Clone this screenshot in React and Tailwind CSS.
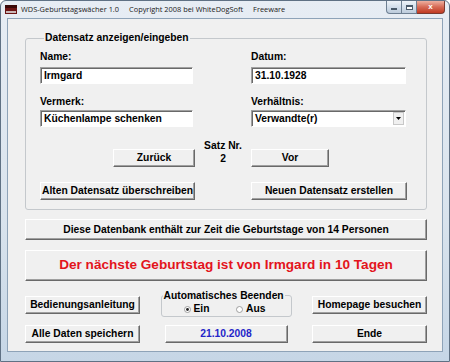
import React from "react";

const raised =
  "bg-[#f0f0f0] border border-t-white border-l-white border-r-[#696969] border-b-[#696969] shadow-[inset_-1px_-1px_0_#a0a0a0]";
const sunken =
  "bg-white border border-t-[#a0a0a0] border-l-[#a0a0a0] border-r-white border-b-white shadow-[inset_1px_1px_0_#696969]";

function Radio({ checked }) {
  return (
    <svg width="7" height="7" viewBox="0 0 7 7" className="shrink-0">
      <circle cx="3.5" cy="3.5" r="3" fill="#fff" stroke="#8a8a8a" strokeWidth="0.8" />
      {checked && <circle cx="3.5" cy="3.5" r="1.4" fill="#222" />}
    </svg>
  );
}

function Btn({ children, className = "" }) {
  return (
    <div className={`${raised} h-[18px] flex items-center justify-center leading-none ${className}`}>
      {children}
    </div>
  );
}

export default function App() {
  return (
    <div
      className="w-[450px] h-[362px] flex flex-col border border-[#5f7184] rounded-t-[6px] bg-[linear-gradient(to_bottom,#e7edf4,#d9e3ed_60%,#c6d6e6)] overflow-hidden"
      style={{ fontFamily: '"Liberation Sans", Arial, sans-serif' }}
    >
      {/* Title bar */}
      <div className="h-[17px] flex items-start shrink-0">
        <div className="pt-[4px] pl-[4px]">
          <svg width="12" height="9" viewBox="0 0 12 9">
            <rect x="0" y="0" width="12" height="9" fill="#6b1414" />
            <rect x="0" y="0" width="12" height="3" fill="#3a0808" />
            <rect x="1" y="6" width="10" height="2" fill="#c9b7b7" />
          </svg>
        </div>
        <div
          className="flex items-center h-[17px] pl-[4px] text-[7.4px] text-[#1a1a1a] whitespace-nowrap"
          style={{ fontFamily: '"Open Sans", "Noto Sans", sans-serif' }}
        >
          <span>WDS-Geburtstagswächer 1.0</span>
          <span className="ml-[10px]">Copyright 2008 bei WhiteDogSoft</span>
          <span className="ml-[10px]">Freeware</span>
        </div>
        <div className="ml-auto mr-[4px] flex h-[13px]">
          <div className="w-[16px] h-[13px] border border-[#6d7f92] border-t-0 rounded-bl-[4px] bg-[linear-gradient(to_bottom,#eef3f8,#d3dfeb_50%,#bccbdb)] flex items-center justify-center">
            <div className="w-[6px] h-[2px] bg-white border border-[#4a5a6a] mt-[3px]" />
          </div>
          <div className="w-[15px] h-[13px] border border-[#6d7f92] border-t-0 border-l-0 bg-[linear-gradient(to_bottom,#eef3f8,#d3dfeb_50%,#bccbdb)] flex items-center justify-center">
            <div className="w-[7px] h-[5px] border border-[#4a5a6a] border-t-2 bg-white" />
          </div>
          <div className="w-[28px] h-[13px] border border-[#7a3a30] border-t-0 border-l-0 rounded-br-[4px] bg-[linear-gradient(to_bottom,#eeb0a0,#d66a55_50%,#c13a22)] flex items-center justify-center">
            <span className="text-white font-bold text-[8px] leading-none">x</span>
          </div>
        </div>
      </div>

      {/* Client area */}
      <div className="flex-1 mx-[6px] mb-[9px] bg-[#f0f0f0] border border-[#8ea3b8] text-[10.3px] font-bold text-black pl-[17px] pr-[15px]">
        {/* Group box */}
        <div className="mt-[19px] border border-[#c4c8cc] rounded-[3px] pl-[14px] pb-[9px]">
          <div className="-mt-[7px] ml-[4px] px-[1px] w-fit bg-[#f0f0f0] leading-[12px]">
            Datensatz anzeigen/eingeben
          </div>
          <div className="grid grid-cols-[155px_56px_156px]">
            <div className="flex flex-col">
              <div className="mt-[7px] leading-[12px]">Name:</div>
              <div className={`${sunken} mt-[4px] h-[17px] w-[153px] flex items-center pl-[3px]`}>Irmgard</div>
              <div className="mt-[12px] leading-[12px]">Vermerk:</div>
              <div className={`${sunken} mt-[2px] h-[17px] w-[153px] flex items-center pl-[3px]`}>Küchenlampe schenken</div>
            </div>
            <div />
            <div className="flex flex-col">
              <div className="mt-[7px] leading-[12px]">Datum:</div>
              <div className={`${sunken} mt-[4px] h-[17px] w-[155px] flex items-center pl-[3px]`}>31.10.1928</div>
              <div className="mt-[12px] leading-[12px]">Verhältnis:</div>
              <div className={`${sunken} mt-[2px] h-[17px] w-[155px] flex items-center pl-[3px] pr-[1px]`}>
                <span className="flex-1">Verwandte(r)</span>
                <div className="w-[11px] h-[13px] bg-[#f0f0f0] border border-[#c8c8c8] flex items-center justify-center">
                  <svg width="5" height="3" viewBox="0 0 5 3">
                    <path d="M0 0H5L2.5 3Z" fill="#000" />
                  </svg>
                </div>
              </div>
            </div>

            {/* Navigation row */}
            <div className="flex justify-end mt-[22px]">
              <Btn className="w-[82px]">Zurück</Btn>
            </div>
            <div className="flex flex-col items-center mt-[12px] leading-[13px] -ml-[4px] mr-[-4px] whitespace-nowrap">
              <span>Satz Nr.</span>
              <span>2</span>
            </div>
            <div className="mt-[22px]">
              <Btn className="w-[78px]">Vor</Btn>
            </div>

            <div className="mt-[15px]">
              <Btn className="w-[155px]">Alten Datensatz überschreiben</Btn>
            </div>
            <div />
            <div className="mt-[15px]">
              <Btn className="w-[156px]">Neuen Datensatz erstellen</Btn>
            </div>
          </div>
        </div>

        {/* Info bar */}
        <div className={`${raised} mt-[9px] h-[21px] flex items-center justify-center`}>
          Diese Datenbank enthält zur Zeit die Geburtstage von 14 Personen
        </div>

        {/* Red bar */}
        <div className={`${raised} mt-[10px] h-[31px] flex items-center justify-center text-[13.6px] text-[#e3141c]`}>
          Der nächste Geburtstag ist von Irmgard in 10 Tagen
        </div>

        {/* Row 3 */}
        <div className="mt-[14px] flex justify-between items-start">
          <Btn className="w-[115px] mt-[1px]">Bedienungsanleitung</Btn>
          <div className="w-[131px] h-[22px] border border-[#c4c8cc] rounded-[3px] flex flex-col">
            <div className="-mt-[6px] ml-[1px] w-fit px-[1px] bg-[#f0f0f0] leading-[12px] whitespace-nowrap">
              Automatisches Beenden
            </div>
            <div className="flex justify-between items-center pl-[22px] pr-[25px] mt-[1px]">
              <div className="flex items-center gap-[2px]">
                <Radio checked />
                <span className="leading-[12px] ml-[1px]">Ein</span>
              </div>
              <div className="flex items-center gap-[2px]">
                <Radio />
                <span className="leading-[12px] ml-[1px]">Aus</span>
              </div>
            </div>
          </div>
          <Btn className="w-[115px] mt-[1px]">Homepage besuchen</Btn>
        </div>

        {/* Row 4 */}
        <div className="mt-[8px] flex justify-between items-start">
          <Btn className="w-[115px]">Alle Daten speichern</Btn>
          <div className={`${raised} w-[123px] h-[18px] flex items-center justify-center text-[#2424c8]`}>
            21.10.2008
          </div>
          <Btn className="w-[115px]">Ende</Btn>
        </div>
      </div>
    </div>
  );
}
